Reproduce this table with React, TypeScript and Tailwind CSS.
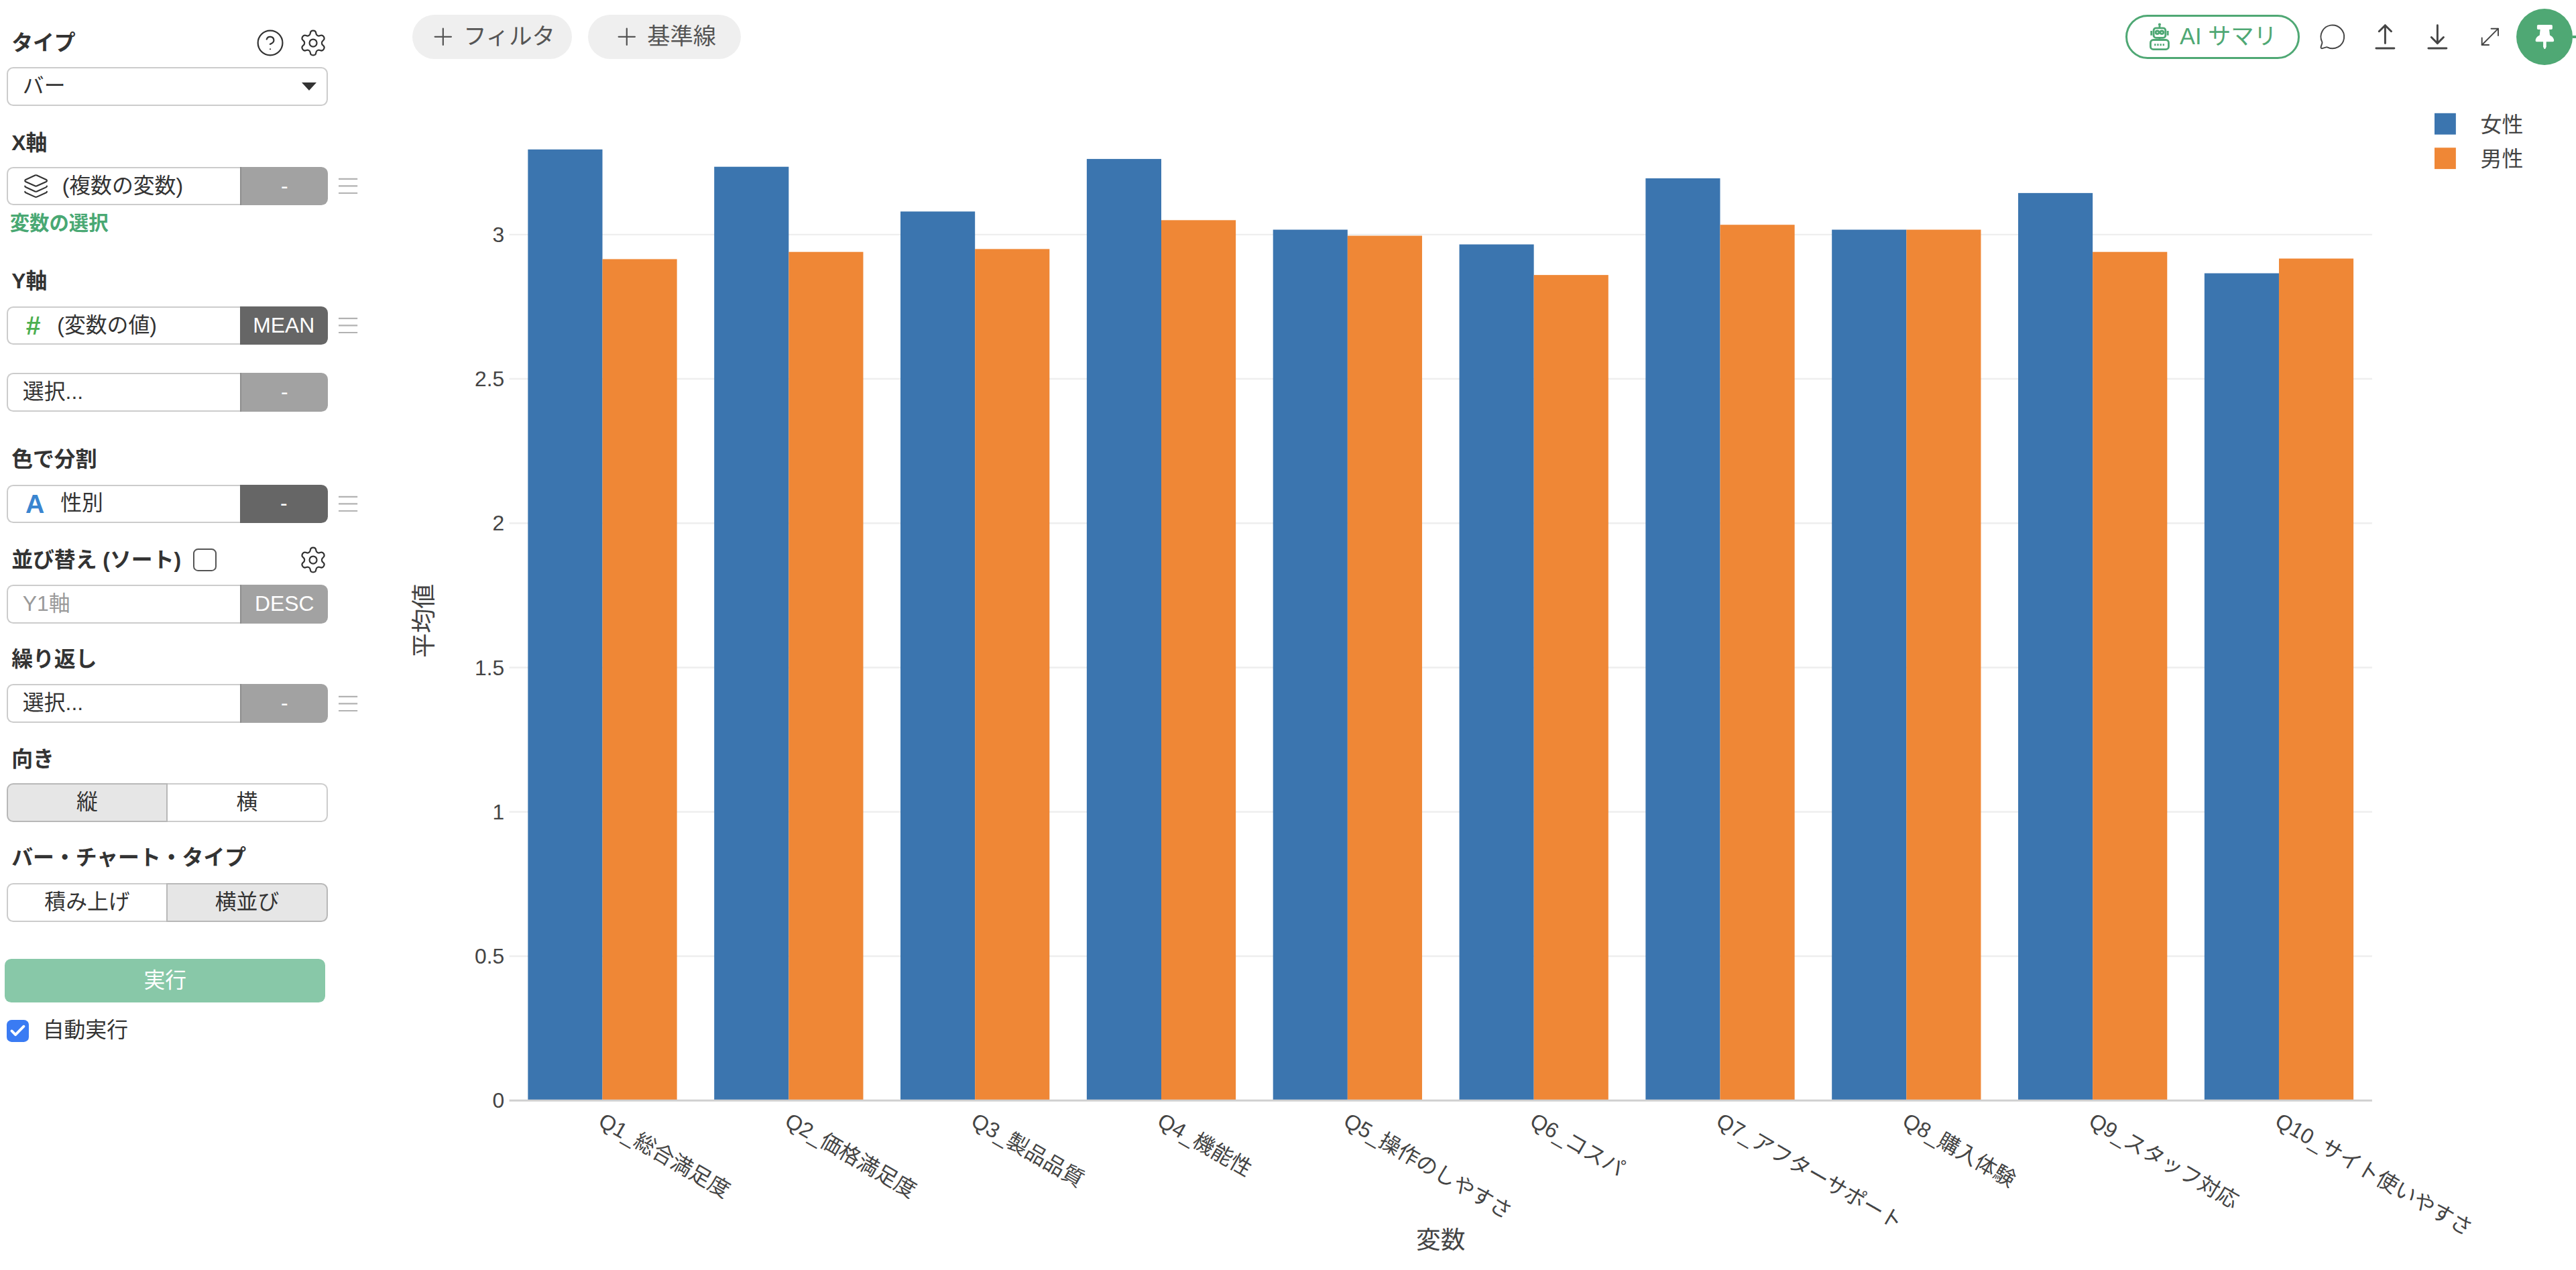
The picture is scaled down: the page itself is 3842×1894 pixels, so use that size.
import React from "react";
import { CircleHelp, Settings, Layers, MessageCircle, MoveDiagonal, Plus, Check } from "lucide-react";
import { FaThumbtack } from "react-icons/fa";

const FONT = "'Liberation Sans', 'Noto Sans CJK JP', sans-serif";

const categories = [
  "Q1_総合満足度",
  "Q2_価格満足度",
  "Q3_製品品質",
  "Q4_機能性",
  "Q5_操作のしやすさ",
  "Q6_コスパ",
  "Q7_アフターサポート",
  "Q8_購入体験",
  "Q9_スタッフ対応",
  "Q10_サイト使いやすさ",
];
const female = [3.295, 3.235, 3.08, 3.262, 3.017, 2.966, 3.195, 3.017, 3.144, 2.866];
const male = [2.915, 2.94, 2.95, 3.05, 2.996, 2.86, 3.034, 3.017, 2.94, 2.917];

const BLUE = "#3b75af";
const ORANGE = "#ef8736";

const labelCls = "ml-[3px] text-[13px] font-bold leading-[18px] text-[#333333]";

function Ham() {
  return (
    <svg width="12" height="11" viewBox="0 0 12 11" className="ml-[6.5px] shrink-0">
      <path d="M0 1.2h11.5M0 5.5h11.5M0 9.8h11.5" stroke="#b2b2b2" strokeWidth="0.9" />
    </svg>
  );
}

function Field({
  children,
  right,
  tone,
  ham,
  className,
}: {
  children: React.ReactNode;
  right: React.ReactNode;
  tone: "dark" | "light";
  ham?: boolean;
  className?: string;
}) {
  const rightCls =
    tone === "dark" ? "bg-[#666666]" : "bg-[#a2a2a2] border-l border-[#8e8e8e]";
  return (
    <div className={`flex items-center ${className ?? ""}`}>
      <div className="flex h-[23.5px] w-[195.5px]">
        <div className="flex min-w-0 flex-1 items-center rounded-l-[4px] border border-r-0 border-[#cccccc] bg-white text-[13px] text-[#333333]">
          {children}
        </div>
        <div
          className={`flex w-[53.5px] items-center justify-center rounded-r-[4px] text-[13px] text-white ${rightCls}`}
        >
          {right}
        </div>
      </div>
      {ham && <Ham />}
    </div>
  );
}

function Toggle({ left, right, selected, className }: { left: string; right: string; selected: 0 | 1; className?: string }) {
  const sel = "bg-[#e6e6e6] border-[#b8b8b8]";
  const uns = "bg-white border-[#cccccc]";
  return (
    <div className={`flex h-[23.5px] w-[195.5px] text-[13px] text-[#333333] ${className ?? ""}`}>
      <div
        className={`flex flex-1 items-center justify-center rounded-l-[4px] border ${
          selected === 0 ? sel : `${uns} border-r-0`
        }`}
      >
        {left}
      </div>
      <div
        className={`flex flex-1 items-center justify-center rounded-r-[4px] border ${
          selected === 1 ? sel : `${uns} border-l-0`
        }`}
      >
        {right}
      </div>
    </div>
  );
}

function RobotIcon() {
  return (
    <svg width="13" height="17" viewBox="0 0 12 16" fill="none" stroke="#4fa874" strokeWidth="1.1">
      <circle cx="6" cy="1" r="0.8" fill="#4fa874" stroke="none" />
      <path d="M6 1.6v1.4" />
      <rect x="2.6" y="3" width="6.8" height="5.6" rx="1.4" />
      <circle cx="4.7" cy="5.5" r="0.9" />
      <circle cx="7.3" cy="5.5" r="0.9" />
      <path d="M1.3 4.6v2.6M10.7 4.6v2.6" />
      <path d="M6 8.6v1.2" />
      <rect x="0.8" y="9.8" width="10.4" height="5.4" rx="1.6" />
      <path d="M3 12.6h6" strokeDasharray="0.9 0.7" strokeWidth="1.2" />
    </svg>
  );
}

function UpIcon() {
  return (
    <svg width="15" height="17" viewBox="0 0 15 17" fill="none" stroke="#444444" strokeWidth="1.2" strokeLinecap="round" strokeLinejoin="round">
      <path d="M7.5 1.5v11M3.8 5.2 7.5 1.5l3.7 3.7M2 15.5h11" />
    </svg>
  );
}

function DownIcon() {
  return (
    <svg width="15" height="17" viewBox="0 0 15 17" fill="none" stroke="#444444" strokeWidth="1.2" strokeLinecap="round" strokeLinejoin="round">
      <path d="M7.5 1.5v11M3.8 8.8l3.7 3.7 3.7-3.7M2 15.5h11" />
    </svg>
  );
}

function Chart() {
  const x0 = 310;
  const x1 = 1444;
  const zero = 670;
  const k = 175.7;
  const cw = (x1 - x0) / categories.length;
  const bw = (cw * 0.8) / 2;
  const ticks = [0, 0.5, 1, 1.5, 2, 2.5, 3];
  return (
    <svg viewBox="222 45 1346 728" width="1346" height="728" className="block" style={{ fontFamily: FONT }}>
      {ticks.map((t) => {
        const y = zero - t * k;
        return (
          <g key={t}>
            {t > 0 && <line x1={x0} x2={x1} y1={y} y2={y} stroke="#eeeeee" strokeWidth="1" />}
            <text x={307} y={y} fontSize="13" fill="#444444" textAnchor="end" dominantBaseline="central">
              {t}
            </text>
          </g>
        );
      })}
      {categories.map((c, i) => {
        const fx = x0 + i * cw + cw * 0.1;
        const fh = female[i] * k;
        const mh = male[i] * k;
        return (
          <g key={c}>
            <rect x={fx} y={zero - fh} width={bw} height={fh} fill={BLUE} />
            <rect x={fx + bw} y={zero - mh} width={bw} height={mh} fill={ORANGE} />
          </g>
        );
      })}
      <line x1={x0} x2={x1} y1={zero} y2={zero} stroke="#d0d0d0" strokeWidth="1.3" />
      {categories.map((c, i) => {
        const ax = x0 + (i + 0.5) * cw - 1;
        const ay = 681;
        return (
          <text
            key={c}
            x={ax}
            y={ay}
            fontSize="13"
            fill="#444444"
            textAnchor="start"
            dominantBaseline="central"
            transform={`rotate(30 ${ax} ${ay})`}
          >
            {c}
          </text>
        );
      })}
      <text
        x={258}
        y={378}
        fontSize="15"
        fill="#444444"
        textAnchor="middle"
        dominantBaseline="central"
        transform="rotate(-90 258 378)"
      >
        平均値
      </text>
      <text x={877} y={755} fontSize="15" fill="#444444" textAnchor="middle" dominantBaseline="central">
        変数
      </text>
      <rect x={1482} y={69} width={13} height={13} fill={BLUE} />
      <text x={1510} y={76} fontSize="13" fill="#444444" dominantBaseline="central">
        女性
      </text>
      <rect x={1482} y={90} width={13} height={13} fill={ORANGE} />
      <text x={1510} y={97} fontSize="13" fill="#444444" dominantBaseline="central">
        男性
      </text>
    </svg>
  );
}

export default function App() {
  return (
    <div className="flex h-[773px] w-[1568px] overflow-hidden bg-white font-['Liberation_Sans','Noto_Sans_CJK_JP',sans-serif] text-[#333333] [zoom:2.45]">
      <aside className="flex w-[222px] shrink-0 flex-col pl-1 pt-[17px]">
        <div className="flex h-[18px] w-[195.5px] items-center justify-between">
          <span className={labelCls}>タイプ</span>
          <div className="flex items-center gap-[8px] text-[#333333]">
            <CircleHelp size={18} strokeWidth={1.2} />
            <Settings size={18} strokeWidth={1.2} />
          </div>
        </div>
        <div className="mt-[6px] flex h-[23.5px] w-[195.5px] items-center justify-between rounded-[4px] border border-[#cccccc] bg-white pl-[9px] pr-[6px] text-[13px] text-[#333333]">
          <span>バー</span>
          <span className="h-0 w-0 border-x-[4.5px] border-t-[5px] border-x-transparent border-t-[#333333]" />
        </div>

        <div className={`${labelCls} mt-[13.5px]`}>X軸</div>
        <Field className="mt-[5.5px]" right="-" tone="light" ham>
          <span className="ml-[9px] flex w-[16px] justify-center text-[#333333]">
            <Layers size={16} strokeWidth={1.3} />
          </span>
          <span className="ml-[8px]">(複数の変数)</span>
        </Field>
        <div className="ml-[2px] mt-[2.7px] text-[12px] font-bold leading-[16px] text-[#49a873]">変数の選択</div>

        <div className={`${labelCls} mt-[18.3px]`}>Y軸</div>
        <Field className="mt-[6.5px]" right="MEAN" tone="dark" ham>
          <span className="ml-[9px] w-[13px] text-center text-[16px] font-bold leading-none text-[#4caf50]">#</span>
          <span className="ml-[8px]">(変数の値)</span>
        </Field>
        <Field className="mt-[17px]" right="-" tone="light">
          <span className="ml-[9px]">選択...</span>
        </Field>

        <div className={`${labelCls} mt-[20.1px]`}>色で分割</div>
        <Field className="mt-[6.4px]" right="-" tone="dark" ham>
          <span className="ml-[10px] w-[13px] text-center text-[16px] font-bold leading-none text-[#3a85d0]">A</span>
          <span className="ml-[9px]">性別</span>
        </Field>

        <div className="mt-[13.3px] flex h-[18px] w-[195.5px] items-center justify-between">
          <div className="flex items-center">
            <span className={labelCls}>並び替え (ソート)</span>
            <span className="ml-[7.5px] h-[14px] w-[14px] rounded-[3px] border border-[#555555] bg-white" />
          </div>
          <Settings size={18} strokeWidth={1.2} className="text-[#333333]" />
        </div>
        <Field className="mt-[6.2px]" right="DESC" tone="light">
          <span className="ml-[9px] text-[#9a9a9a]">Y1軸</span>
        </Field>

        <div className={`${labelCls} mt-[13px]`}>繰り返し</div>
        <Field className="mt-[6px]" right="-" tone="light" ham>
          <span className="ml-[9px]">選択...</span>
        </Field>

        <div className={`${labelCls} mt-[13px]`}>向き</div>
        <Toggle className="mt-[6px]" left="縦" right="横" selected={0} />

        <div className={`${labelCls} mt-[12.5px]`}>バー・チャート・タイプ</div>
        <Toggle className="mt-[6.7px]" left="積み上げ" right="横並び" selected={1} />

        <button className="ml-[-1px] mt-[22.6px] flex h-[26.6px] w-[195px] items-center justify-center rounded-[4px] bg-[#88c8a8] text-[13px] text-white">
          実行
        </button>

        <div className="mt-[9.1px] flex h-[16px] items-center">
          <span className="flex h-[13.5px] w-[13.5px] items-center justify-center rounded-[3px] bg-[#3a7bf3] text-white">
            <Check size={11} strokeWidth={3.5} />
          </span>
          <span className="ml-[8.5px] text-[13px] text-[#333333]">自動実行</span>
        </div>
      </aside>

      <main className="flex min-w-0 flex-1 flex-col">
        <div className="flex h-[45px] shrink-0 items-center justify-between pl-[29px]">
          <div className="flex items-center gap-[10px]">
            <div className="flex h-[27px] w-[97px] items-center justify-center gap-[4px] rounded-full bg-[#efefef] text-[14px] text-[#555555]">
              <Plus size={17} strokeWidth={1.3} />
              <span>フィルタ</span>
            </div>
            <div className="flex h-[27px] w-[93px] items-center justify-center gap-[4px] rounded-full bg-[#efefef] text-[14px] text-[#555555]">
              <Plus size={17} strokeWidth={1.3} />
              <span>基準線</span>
            </div>
          </div>
          <div className="flex items-center">
            <div className="flex h-[27px] w-[106px] items-center justify-center gap-[6px] rounded-full border-[1.5px] border-[#4fa874] text-[14px] text-[#4fa874]">
              <RobotIcon />
              <span>AI サマリ</span>
            </div>
            <div className="ml-1 flex w-8 justify-center text-[#444444]">
              <MessageCircle size={17} strokeWidth={1.1} />
            </div>
            <div className="flex w-8 justify-center">
              <UpIcon />
            </div>
            <div className="flex w-8 justify-center">
              <DownIcon />
            </div>
            <div className="flex w-8 justify-center text-[#444444]">
              <MoveDiagonal size={17} strokeWidth={1.1} />
            </div>
            <div className="flex h-[34px] w-[34px] items-center justify-center rounded-full bg-[#4fa874] text-white">
              <FaThumbtack size={15} />
            </div>
            <div className="h-[1.5px] w-[2px] bg-[#4fa874]" />
          </div>
        </div>
        <Chart />
      </main>
    </div>
  );
}
